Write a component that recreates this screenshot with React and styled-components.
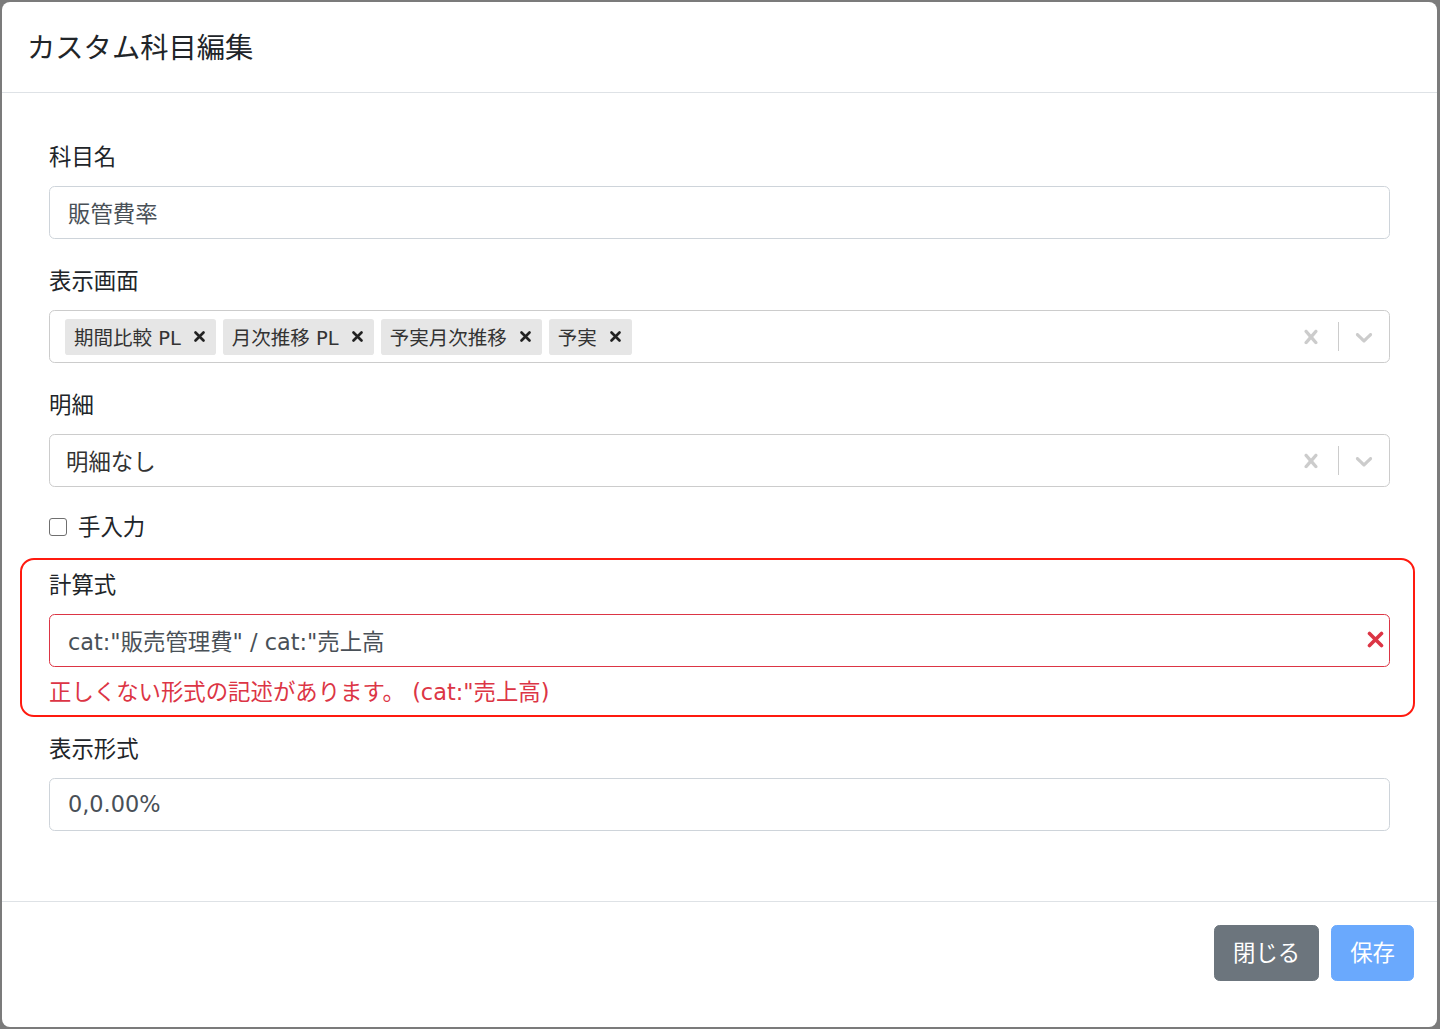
import React from "react";
import styled, { createGlobalStyle } from "styled-components";

const Global = createGlobalStyle`
  html, body { margin: 0; padding: 0; }
  body {
    background: #7b7b7b;
    font-family: "DejaVu Sans", "Noto Sans CJK JP", sans-serif;
    color: #212529;
  }
  * { box-sizing: border-box; }
`;

const Backdrop = styled.div`
  padding: 2px 3px 2px 2px;
  min-height: 1029px;
`;

const Modal = styled.div`
  background: #fff;
  border-radius: 8px;
  overflow: hidden;
`;

const Header = styled.div`
  padding: 26px 25px 22px;
  border-bottom: 1px solid #dee2e6;
`;

const Title = styled.h5`
  margin: 0;
  font-size: 28.3px;
  font-weight: 400;
  line-height: 42px;
  color: #212529;
`;

const Body = styled.div`
  padding: 47px 47px 70px 47px;
  display: flex;
  flex-direction: column;
`;

const Group = styled.div`
  display: flex;
  flex-direction: column;
  margin-top: ${(p) => p.$mt ?? 25}px;
`;

const ErrorGroup = styled.div`
  display: flex;
  flex-direction: column;
  margin: 14px -25px 0 -29px;
  padding: 8px 23px 6px 27px;
  border: 2px solid #ff1a0f;
  border-radius: 14px;
`;

const Label = styled.label`
  font-size: 22.4px;
  line-height: 34px;
  margin-bottom: 12px;
  color: #212529;
`;

const Input = styled.div`
  height: 53px;
  border: 1px solid ${(p) => (p.$invalid ? "#dc3545" : "#ced4da")};
  border-radius: 5.6px;
  display: flex;
  align-items: center;
  padding: 0 ${(p) => (p.$invalid ? 5 : 17)}px 2px 18px;
  font-size: 22.4px;
  color: #495057;
  white-space: pre;
`;

const InputText = styled.span`
  flex: 1;
`;

const Control = styled.div`
  height: 53px;
  border: 1px solid #cccccc;
  border-radius: 5.6px;
  display: flex;
  align-items: center;
`;

const ValueContainer = styled.div`
  flex: 1;
  display: flex;
  align-items: center;
  padding: 0 11px;
`;

const SingleValue = styled.span`
  font-size: 22.4px;
  color: #333;
  padding: 0 0 2px 5px;
`;

const Tag = styled.div`
  display: flex;
  align-items: center;
  background: #e6e6e6;
  border-radius: 2.8px;
  height: 36px;
  margin: 0 3.5px;
  &:first-child { margin-left: 4px; }
`;

const TagLabel = styled.span`
  font-size: 19.5px;
  color: #333;
  padding: 0 7px 1px 9px;
  white-space: nowrap;
`;

const TagRemove = styled.span`
  display: flex;
  align-items: center;
  padding: 0 11px 0 6px;
  color: #222;
`;

const Indicators = styled.div`
  display: flex;
  align-items: center;
  height: 100%;
`;

const Indicator = styled.div`
  width: 50px;
  display: flex;
  align-items: center;
  justify-content: center;
  color: #cccccc;
  padding-right: ${(p) => (p.$clear ? 4 : 0)}px;
`;

const Separator = styled.span`
  width: 1px;
  height: 29px;
  background: #cccccc;
`;

const CheckRow = styled.label`
  display: flex;
  align-items: center;
  margin-top: 23px;
  font-size: 22.4px;
  line-height: 34px;
  color: #212529;
`;

const Checkbox = styled.span`
  width: 18px;
  height: 18px;
  border: 1.5px solid #6f6f6f;
  border-radius: 3px;
  margin: 0 11px 0 0;
`;

const Feedback = styled.div`
  margin-top: 8px;
  font-size: 22.4px;
  line-height: 34px;
  color: #dc3545;
  white-space: pre;
`;

const Footer = styled.div`
  border-top: 1px solid #dee2e6;
  padding: 23px 23px 46px;
  display: flex;
  justify-content: flex-end;
  gap: 12px;
`;

const Button = styled.button`
  font-family: inherit;
  font-size: 22.4px;
  line-height: 33px;
  padding: 10.5px 18px;
  border-radius: 5.6px;
  border: 1px solid ${(p) => (p.$primary ? "#6aa9fd" : "#6c757d")};
  background: ${(p) => (p.$primary ? "#6aa9fd" : "#6c757d")};
  color: #fff;
`;

const CrossIcon = () => (
  <svg width="28" height="28" viewBox="0 0 20 20" fill="currentColor">
    <path d="M14.348 14.849c-0.469 0.469-1.229 0.469-1.697 0l-2.651-3.030-2.651 3.029c-0.469 0.469-1.229 0.469-1.697 0-0.469-0.469-0.469-1.229 0-1.697l2.758-3.15-2.759-3.152c-0.469-0.469-0.469-1.228 0-1.697s1.228-0.469 1.697 0l2.652 3.031 2.651-3.031c0.469-0.469 1.228-0.469 1.697 0s0.469 1.229 0 1.697l-2.758 3.152 2.758 3.15c0.469 0.469 0.469 1.229 0 1.698z" />
  </svg>
);

const ChevronIcon = () => (
  <svg width="28" height="28" viewBox="0 0 20 20" fill="currentColor">
    <path d="M4.516 7.548c0.436-0.446 1.043-0.481 1.576 0l3.908 3.747 3.908-3.747c0.533-0.481 1.141-0.446 1.574 0 0.436 0.445 0.408 1.197 0 1.615-0.406 0.418-4.695 4.502-4.695 4.502-0.217 0.223-0.502 0.335-0.787 0.335s-0.57-0.112-0.789-0.335c0 0-4.287-4.084-4.695-4.502s-0.436-1.170 0-1.615z" />
  </svg>
);

const SmallX = () => (
  <svg width="11" height="11" viewBox="0 0 11 11">
    <path d="M1.5 1.5 L9.5 9.5 M9.5 1.5 L1.5 9.5" stroke="currentColor" strokeWidth="2.6" strokeLinecap="round" />
  </svg>
);

const InvalidX = () => (
  <svg width="17" height="17" viewBox="0 0 17 17">
    <path d="M2.5 2.5 L14.5 14.5 M14.5 2.5 L2.5 14.5" stroke="#dc3545" strokeWidth="3.6" strokeLinecap="round" />
  </svg>
);

const tags = ["期間比較 PL", "月次推移 PL", "予実月次推移", "予実"];

const SelectIndicators = () => (
  <Indicators>
    <Indicator $clear>
      <CrossIcon />
    </Indicator>
    <Separator />
    <Indicator>
      <ChevronIcon />
    </Indicator>
  </Indicators>
);

export default function App() {
  return (
    <>
      <Global />
      <Backdrop>
        <Modal>
          <Header>
            <Title>カスタム科目編集</Title>
          </Header>
          <Body>
            <Group $mt={0}>
              <Label>科目名</Label>
              <Input>
                <InputText>販管費率</InputText>
              </Input>
            </Group>
            <Group>
              <Label>表示画面</Label>
              <Control>
                <ValueContainer>
                  {tags.map((t) => (
                    <Tag key={t}>
                      <TagLabel>{t}</TagLabel>
                      <TagRemove>
                        <SmallX />
                      </TagRemove>
                    </Tag>
                  ))}
                </ValueContainer>
                <SelectIndicators />
              </Control>
            </Group>
            <Group>
              <Label>明細</Label>
              <Control>
                <ValueContainer>
                  <SingleValue>明細なし</SingleValue>
                </ValueContainer>
                <SelectIndicators />
              </Control>
            </Group>
            <CheckRow>
              <Checkbox />
              手入力
            </CheckRow>
            <ErrorGroup>
              <Label>計算式</Label>
              <Input $invalid>
                <InputText>cat:"販売管理費" / cat:"売上高</InputText>
                <InvalidX />
              </Input>
              <Feedback>正しくない形式の記述があります。 (cat:"売上高)</Feedback>
            </ErrorGroup>
            <Group $mt={15}>
              <Label>表示形式</Label>
              <Input>
                <InputText>0,0.00%</InputText>
              </Input>
            </Group>
          </Body>
          <Footer>
            <Button>閉じる</Button>
            <Button $primary>保存</Button>
          </Footer>
        </Modal>
      </Backdrop>
    </>
  );
}
